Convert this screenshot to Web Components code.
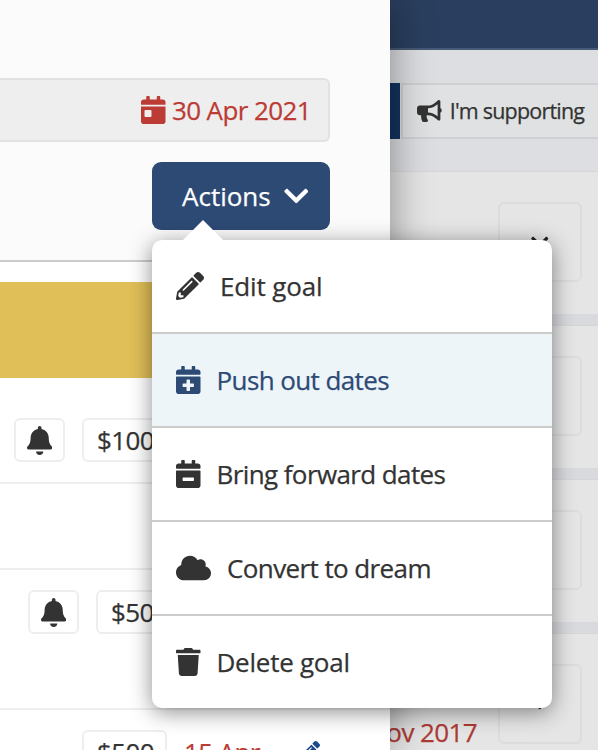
<!DOCTYPE html>
<html>
<head>
<meta charset="utf-8">
<title>Goal actions</title>
<style>
    html, body {
        margin: 0;
        height: 100%;
        overflow: hidden;
        background: #e5e5e5;
    }

    body {
        color: #333;
        font-family: "Open Sans", "Liberation Sans", sans-serif;
        font-size: 26px;
        letter-spacing: -.6px;
        -webkit-text-stroke: .25px currentColor;
    }
</style>
</head>
<body>
<goal-page>
    <goal-panel slot="panel">
        <goal-row indent="14" top="40" bottom="20">
            <bell-button></bell-button>
            <amount-button>$100</amount-button>
        </goal-row>
        <goal-row height="86"></goal-row>
        <goal-row indent="28" top="20" bottom="74">
            <bell-button></bell-button>
            <amount-button>$50</amount-button>
        </goal-row>
        <goal-row indent="82" top="20" bottom="0">
            <amount-button>$500</amount-button>
            <late-date>15 Apr</late-date>
            <fa-icon name="pencil" size="20" style="color:#1d4a8a;margin:11px 0 0 23px"></fa-icon>
        </goal-row>
    </goal-panel>
    <side-panel slot="side">
        <side-card></side-card>
        <side-card></side-card>
        <side-card></side-card>
        <side-card date="Nov 2017"></side-card>
    </side-panel>
    <action-menu slot="menu">
        <menu-item icon="pencil" style="letter-spacing:-.15px">Edit goal</menu-item>
        <menu-item icon="calendarPlus" active>Push out dates</menu-item>
        <menu-item icon="calendarMinus">Bring forward dates</menu-item>
        <menu-item icon="cloud">Convert to dream</menu-item>
        <menu-item icon="trash" style="letter-spacing:-.25px">Delete goal</menu-item>
    </action-menu>
</goal-page>

<script>
const calendarTop = 'M436 160H12c-6.6 0-12-5.4-12-12v-36c0-26.5 21.5-48 48-48h48V12c0-6.6 5.4-12 12-12h40c6.6 0 12 5.4 12 12v52h128V12c0-6.6 5.4-12 12-12h40c6.6 0 12 5.4 12 12v52h48c26.5 0 48 21.5 48 48v36c0 6.6-5.4 12-12 12z';

const icons = {
    bell: [448, 'M224 512c35.32 0 63.97-28.65 63.97-64H160.03c0 35.35 28.65 64 63.97 64zm215.39-149.71c-19.32-20.76-55.47-51.99-55.47-154.29 0-77.7-54.48-139.9-127.94-155.16V32c0-17.67-14.32-32-31.98-32s-31.98 14.33-31.98 32v20.84C118.56 68.1 64.08 130.3 64.08 208c0 102.3-36.15 133.53-55.47 154.29-6 6.45-8.66 14.16-8.61 21.71.11 16.4 12.98 32 32.1 32h383.8c19.12 0 32-15.6 32.1-32 .05-7.55-2.61-15.27-8.61-21.71z'],
    pencil: [512, 'M497.9 142.1l-46.1 46.1c-4.7 4.7-12.3 4.7-17 0l-111-111c-4.7-4.7-4.7-12.3 0-17l46.1-46.1c18.7-18.7 49.1-18.7 67.9 0l60.1 60.1c18.8 18.7 18.8 49.1 0 67.9zM284.2 99.8L21.6 362.4.4 483.9c-2.9 16.4 11.4 30.6 27.8 27.8l121.5-21.3 262.6-262.6c4.7-4.7 4.7-12.3 0-17l-111-111c-4.8-4.7-12.4-4.7-17.1 0zM124.1 339.9c-5.5-5.5-5.5-14.3 0-19.8l154-154c5.5-5.5 14.3-5.5 19.8 0s5.5 14.3 0 19.8l-154 154c-5.5 5.5-14.3 5.5-19.8 0zM88 424h48v36.3l-64.5 11.3-31.1-31.1L51.7 376H88v48z'],
    calendarPlus: [448, calendarTop + 'M12 192h424c6.6 0 12 5.4 12 12v260c0 26.5-21.5 48-48 48H48c-26.5 0-48-21.5-48-48V204c0-6.6 5.4-12 12-12zm316 140c0-6.6-5.4-12-12-12h-60v-60c0-6.6-5.4-12-12-12h-40c-6.6 0-12 5.4-12 12v60h-60c-6.6 0-12 5.4-12 12v40c0 6.6 5.4 12 12 12h60v60c0 6.6 5.4 12 12 12h40c6.6 0 12-5.4 12-12v-60h60c6.6 0 12-5.4 12-12v-40z'],
    calendarMinus: [448, calendarTop + 'M12 192h424c6.6 0 12 5.4 12 12v260c0 26.5-21.5 48-48 48H48c-26.5 0-48-21.5-48-48V204c0-6.6 5.4-12 12-12zm304 192c6.6 0 12-5.4 12-12v-40c0-6.6-5.4-12-12-12H132c-6.6 0-12 5.4-12 12v40c0 6.6 5.4 12 12 12h184z'],
    calendarDay: [448, 'M0 464c0 26.5 21.5 48 48 48h352c26.5 0 48-21.5 48-48V192H0v272zm64-192c0-8.8 7.2-16 16-16h96c8.8 0 16 7.2 16 16v96c0 8.8-7.2 16-16 16H80c-8.8 0-16-7.2-16-16v-96zM400 64h-48V16c0-8.8-7.2-16-16-16h-32c-8.8 0-16 7.2-16 16v48H160V16c0-8.8-7.2-16-16-16h-32c-8.8 0-16 7.2-16 16v48H48C21.5 64 0 85.5 0 112v48h448v-48c0-26.5-21.5-48-48-48z'],
    cloud: [640, 'M537.6 226.6c4.1-10.7 6.4-22.4 6.4-34.6 0-53-43-96-96-96-19.7 0-38.1 6-53.3 16.2C367 64.2 315.3 32 256 32c-88.4 0-160 71.6-160 160 0 2.7.1 5.4.2 8.1C40.2 219.8 0 273.2 0 336c0 79.5 64.5 144 144 144h368c70.7 0 128-57.3 128-128 0-61.9-44-113.6-102.4-125.4z'],
    trash: [448, 'M432 32H312l-9.4-18.7A24 24 0 0 0 281.1 0H166.8a23.72 23.72 0 0 0-21.4 13.3L136 32H16A16 16 0 0 0 0 48v32a16 16 0 0 0 16 16h416a16 16 0 0 0 16-16V48a16 16 0 0 0-16-16zM53.2 467a48 48 0 0 0 47.9 45h245.8a48 48 0 0 0 47.9-45L416 128H32z'],
    bullhorn: [576, 'M576 240c0-23.63-12.95-44.04-32-55.12V32.01C544 23.26 537.02 0 512 0c-7.12 0-14.19 2.38-19.98 7.02l-85.03 68.03C364.28 109.19 310.66 128 256 128H64c-35.35 0-64 28.65-64 64v96c0 35.35 28.65 64 64 64h33.7c-1.39 10.48-2.18 21.14-2.18 32 0 39.77 9.26 77.35 25.56 110.94 5.19 10.69 16.52 17.06 28.4 17.06h74.28c26.05 0 41.69-29.84 25.9-50.56-16.4-21.52-26.15-48.36-26.15-77.44 0-11.11 1.62-21.79 4.41-32H256c54.66 0 108.28 18.81 150.98 52.95l85.03 68.03a32.023 32.023 0 0 0 19.98 7.02c24.92 0 32-22.78 32-32V295.13C563.05 284.04 576 263.63 576 240zm-96 141.42l-33.05-26.44C392.95 311.78 325.12 288 256 288v-96c69.12 0 136.95-23.78 190.95-66.98L480 98.58v282.84z'],
    chevron: [448, 'M207.029 381.476L12.686 187.132c-9.373-9.373-9.373-24.569 0-33.941l22.667-22.667c9.357-9.357 24.522-9.375 33.901-.04L224 284.505l154.745-154.021c9.379-9.335 24.544-9.317 33.901.04l22.667 22.667c9.373 9.373 9.373 24.569 0 33.941L240.971 381.476c-9.373 9.372-24.569 9.372-33.942 0z'],
};

class FaIcon extends HTMLElement {
    connectedCallback() {
        const [width, d] = icons[this.getAttribute('name')];
        const size = Number(this.getAttribute('size') || 28);

        this.attachShadow({ mode: 'open' }).innerHTML = `
            <style>
                :host { display: block; flex: none; line-height: 0; }
                svg { display: block; fill: currentColor; stroke: none; }
            </style>
            <svg viewBox="0 0 ${width} 512" width="${size * width / 512}" height="${size}"><path d="${d}"/></svg>
        `;
    }
}

window.customElements.define('fa-icon', FaIcon);

class GoalPage extends HTMLElement {
    constructor() {
        super();

        this.attachShadow({ mode: 'open' }).innerHTML = `
            <style>
                :host {
                    display: grid;
                    grid-template-columns: 390px 208px;
                    height: 750px;
                    overflow: hidden;
                    position: relative;
                }

                ::slotted([slot="panel"]) {
                    position: relative;
                    z-index: 2;
                }

                ::slotted([slot="menu"]) {
                    left: 152px;
                    position: absolute;
                    top: 240px;
                    z-index: 3;
                }
            </style>
            <slot name="panel"></slot>
            <slot name="side"></slot>
            <slot name="menu"></slot>
        `;
    }
}

window.customElements.define('goal-page', GoalPage);

class GoalPanel extends HTMLElement {
    constructor() {
        super();

        this.attachShadow({ mode: 'open' }).innerHTML = `
            <style>
                :host {
                    background: #fff;
                    box-shadow: 0 0 40px rgba(0, 0, 0, .42);
                    display: block;
                    height: 750px;
                    overflow: hidden;
                }

                header {
                    align-items: flex-end;
                    background: #fbfbfb;
                    border-bottom: 2px solid #ccc;
                    box-sizing: border-box;
                    display: flex;
                    flex-direction: column;
                    height: 262px;
                    padding: 78px 60px 0 0;
                }

                .date {
                    align-items: center;
                    background: #eee;
                    border: 2px solid #e2e2e2;
                    border-left: 0;
                    border-radius: 0 6px 6px 0;
                    box-sizing: border-box;
                    color: #bc3b34;
                    display: flex;
                    gap: 6px;
                    height: 64px;
                    justify-content: flex-end;
                    padding-right: 17px;
                    width: 100%;
                }

                button {
                    align-items: center;
                    background: #2d4a75;
                    border: 0;
                    border-radius: 9px;
                    color: #fff;
                    display: flex;
                    font: inherit;
                    gap: 13px;
                    height: 68px;
                    margin-top: 20px;
                    padding: 0 22px 0 30px;
                    width: 178px;
                }

                .banner {
                    background: #e0bf58;
                    height: 96px;
                    margin-top: 20px;
                }
            </style>
            <header>
                <div class="date"><fa-icon name="calendarDay"></fa-icon><span class="label">30 Apr 2021</span></div>
                <button><span class="label">Actions</span><fa-icon name="chevron"></fa-icon></button>
            </header>
            <div class="banner"></div>
            <slot></slot>
        `;
    }
}

window.customElements.define('goal-panel', GoalPanel);

class GoalRow extends HTMLElement {
    connectedCallback() {
        const indent = this.getAttribute('indent') || 0;
        const top = this.getAttribute('top') || 0;
        const bottom = this.getAttribute('bottom') || 0;
        const height = this.getAttribute('height');

        this.attachShadow({ mode: 'open' }).innerHTML = `
            <style>
                :host {
                    align-items: flex-start;
                    border-bottom: 2px solid #eee;
                    box-sizing: content-box;
                    display: flex;
                    gap: 17px;
                    ${height ? `height: ${height - 2}px;` : ''}
                    padding: ${top}px 0 ${bottom}px ${indent}px;
                }
            </style>
            <slot></slot>
        `;
    }
}

window.customElements.define('goal-row', GoalRow);

const smallButtonStyles = `
    :host {
        align-items: center;
        background: #fff;
        border: 2px solid #eee;
        border-radius: 6px;
        box-sizing: border-box;
        display: flex;
        flex: none;
        height: 44px;
        justify-content: center;
    }
`;

class BellButton extends HTMLElement {
    constructor() {
        super();

        this.attachShadow({ mode: 'open' }).innerHTML = `
            <style>
                ${smallButtonStyles}
                :host { width: 51px; }
            </style>
            <fa-icon name="bell" size="29"></fa-icon>
        `;
    }
}

window.customElements.define('bell-button', BellButton);

class AmountButton extends HTMLElement {
    constructor() {
        super();

        this.attachShadow({ mode: 'open' }).innerHTML = `
            <style>
                ${smallButtonStyles}
                :host { justify-content: flex-start; padding: 0 13px; width: 85px; }
            </style>
            <slot></slot>
        `;
    }
}

window.customElements.define('amount-button', AmountButton);

class LateDate extends HTMLElement {
    constructor() {
        super();

        this.attachShadow({ mode: 'open' }).innerHTML = `
            <style>
                :host { color: #bc3b34; display: block; flex: none; line-height: 44px; }
            </style>
            <slot></slot>
        `;
    }
}

window.customElements.define('late-date', LateDate);

class SidePanel extends HTMLElement {
    constructor() {
        super();

        this.attachShadow({ mode: 'open' }).innerHTML = `
            <style>
                :host {
                    background: #d9dade;
                    display: flex;
                    flex-direction: column;
                    height: 750px;
                }

                .bar {
                    background: #2a3f5f;
                    border-bottom: 2px solid #475a76;
                    flex: none;
                    height: 48px;
                }

                .tabs {
                    align-items: center;
                    background: #dcdee1;
                    display: flex;
                    flex: none;
                    gap: 1px;
                    height: 121px;
                }

                .current {
                    background: #12335f;
                    height: 56px;
                    width: 10px;
                }

                .tab {
                    align-items: center;
                    background: #dfe1e2;
                    border: solid #cfd0d2;
                    border-width: 2px 0 2px 2px;
                    box-sizing: border-box;
                    display: flex;
                    flex: 1;
                    font-size: 21.5px;
                    gap: 8px;
                    height: 56px;
                    letter-spacing: -.8px;
                    padding-left: 14px;
                    white-space: nowrap;
                }
            </style>
            <div class="bar"></div>
            <div class="tabs">
                <div class="current"></div>
                <div class="tab"><fa-icon name="bullhorn" size="22"></fa-icon><span class="label">I'm supporting</span></div>
            </div>
            <slot></slot>
        `;
    }
}

window.customElements.define('side-panel', SidePanel);

class SideCard extends HTMLElement {
    connectedCallback() {
        const date = this.getAttribute('date');

        this.attachShadow({ mode: 'open' }).innerHTML = `
            <style>
                :host {
                    align-items: center;
                    background: #e5e5e5;
                    border-top: 1px solid #d6d6d6;
                    box-sizing: border-box;
                    display: flex;
                    flex: none;
                    gap: 21px;
                    height: 143px;
                    justify-content: flex-end;
                    margin-bottom: 11px;
                    padding: 0 16px 2px 0;
                }

                .date {
                    align-self: flex-start;
                    color: #ae3a35;
                    flex: none;
                    line-height: 36px;
                    margin-top: 80px;
                    white-space: nowrap;
                }

                .toggle {
                    align-items: center;
                    border: 2px solid #dcdcdc;
                    border-radius: 6px;
                    box-sizing: border-box;
                    color: #222;
                    display: flex;
                    flex: none;
                    height: 80px;
                    justify-content: center;
                    width: 84px;
                }
            </style>
            ${date ? `<div class="date">${date}</div>` : ''}
            <div class="toggle"><fa-icon name="chevron" size="20"></fa-icon></div>
        `;
    }
}

window.customElements.define('side-card', SideCard);

class ActionMenu extends HTMLElement {
    constructor() {
        super();

        this.attachShadow({ mode: 'open' }).innerHTML = `
            <style>
                :host {
                    background: #fff;
                    border-radius: 10px;
                    box-shadow: 0 4px 22px rgba(0, 0, 0, .45);
                    display: block;
                    width: 400px;
                }

                .arrow {
                    border: solid transparent;
                    border-bottom-color: #fff;
                    border-width: 0 20px 20px;
                    height: 0;
                    left: 31px;
                    position: absolute;
                    top: -20px;
                    width: 0;
                }

                .items {
                    border-radius: 10px;
                    display: flex;
                    flex-direction: column;
                    overflow: hidden;
                }
            </style>
            <div class="arrow"></div>
            <div class="items"><slot></slot></div>
        `;
    }
}

window.customElements.define('action-menu', ActionMenu);

class MenuItem extends HTMLElement {
    connectedCallback() {
        this.attachShadow({ mode: 'open' }).innerHTML = `
            <style>
                :host {
                    align-items: center;
                    border-top: 2px solid #ccc;
                    box-sizing: border-box;
                    display: flex;
                    gap: 16px;
                    height: 94px;
                    padding-left: 24px;
                }

                :host(:first-child) {
                    border-top: 0;
                    height: 92px;
                }

                :host([active]) {
                    background: #edf5f9;
                    color: #2d4a75;
                }
            </style>
            <fa-icon name="${this.getAttribute('icon')}"></fa-icon>
            <slot></slot>
        `;
    }
}

window.customElements.define('menu-item', MenuItem);
</script>
</body>
</html>
